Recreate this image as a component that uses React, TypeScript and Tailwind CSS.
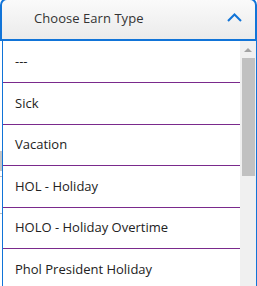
const items = [
  { label: '---', h: 'h-[42px]' },
  { label: 'Sick', h: 'h-[42px]' },
  { label: 'Vacation', h: 'h-[41px]' },
  { label: 'HOL - Holiday', h: 'h-[42px]' },
  { label: 'HOLO - Holiday Overtime', h: 'h-[41px]' },
  { label: 'Phol President Holiday', h: 'h-[41px]' },
];

export default function App() {
  return (
    <div
      className="w-[257px] h-[286px] overflow-hidden bg-white flex flex-col"
      style={{ fontFamily: '"Open Sans", "Noto Sans", sans-serif' }}
    >
      {/* Select header */}
      <div className="-mt-[2px] h-[43px] shrink-0 flex items-center justify-between pl-[32px] pr-[12px] border-2 border-[#1174d8] rounded-t-[7px] bg-gradient-to-b from-[#fafafa] to-[#ebebeb]">
        <span className="text-[13px] text-[#333] tracking-[0.05px] -mt-[2px]">Choose Earn Type</span>
        <svg width="15" height="9" viewBox="0 0 15 9" className="mr-[1px] -mt-[5px]">
          <polyline points="1,8 7.5,1.5 14,8" fill="none" stroke="#1174d8" strokeWidth="2" />
        </svg>
      </div>

      {/* Open list */}
      <div className="flex flex-1 min-h-0">
        <div className="w-[2px] shrink-0 flex flex-col">
          <div className="h-[110px]" />
          <div className="h-[20px] bg-[#c4c4c4]" />
          <div className="h-[5px]" />
          <div className="h-px bg-[#bdbdbd]" />
          <div className="h-[36px]" />
          <div className="h-px bg-[#bdbdbd]" />
        </div>
        <div className="flex-1 flex border-l border-r border-[#1174d8] min-w-0">
          <ul className="flex-1 min-w-0">
            {items.map((it, i) => (
              <li
                key={it.label}
                className={
                  it.h +
                  ' flex items-center pl-[12px] text-[13px] text-[#222] ' +
                  (i < items.length - 1 ? 'border-b border-[#7a2a8c]' : '')
                }
              >
                {it.label}
              </li>
            ))}
          </ul>
          {/* Scrollbar */}
          <div className="w-[16px] shrink-0 bg-[#f0f0f0] flex flex-col items-center">
            <div className="h-[17px] flex items-center justify-center">
              <div className="w-0 h-0 border-l-[4px] border-r-[4px] border-b-[4px] border-l-transparent border-r-transparent border-b-[#a3a3a3]" />
            </div>
            <div className="w-[13px] h-[118px] bg-[#c1c1c1]" />
          </div>
        </div>
      </div>
    </div>
  );
}
